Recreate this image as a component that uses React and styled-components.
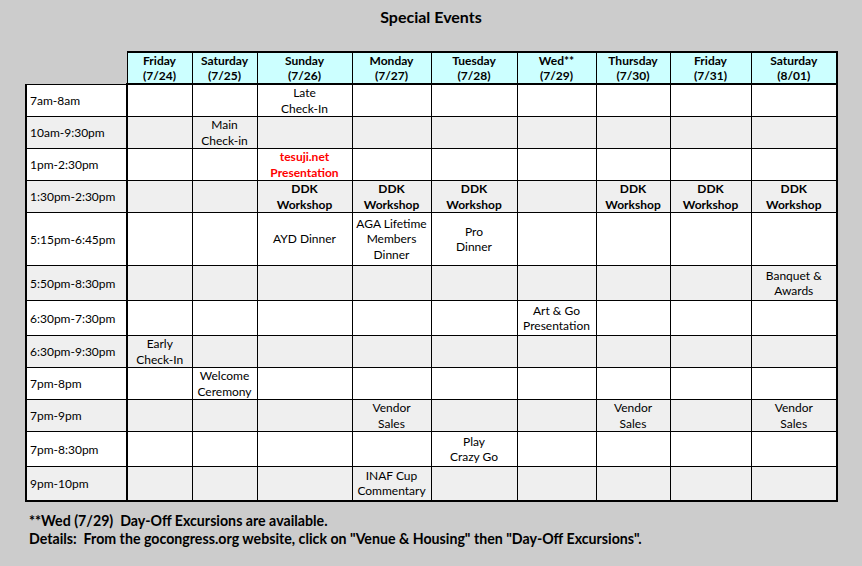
import React from 'react';
import styled, { createGlobalStyle } from 'styled-components';

const days = [
  { name: 'Friday', date: '(7/24)', width: 65 },
  { name: 'Saturday', date: '(7/25)', width: 65 },
  { name: 'Sunday', date: '(7/26)', width: 95 },
  { name: 'Monday', date: '(7/27)', width: 79 },
  { name: 'Tuesday', date: '(7/28)', width: 86 },
  { name: 'Wed**', date: '(7/29)', width: 79 },
  { name: 'Thursday', date: '(7/30)', width: 74 },
  { name: 'Friday', date: '(7/31)', width: 81 },
  { name: 'Saturday', date: '(8/01)', width: 86 }
];

// each row: time label, height, and cells keyed by day index
const rows = [
  { time: '7am-8am', height: 32, cells: { 2: ['Late', 'Check-In'] } },
  { time: '10am-9:30pm', height: 32, cells: { 1: ['Main', 'Check-in'] } },
  { time: '1pm-2:30pm', height: 32, cells: { 2: { lines: ['tesuji.net', 'Presentation'], red: true } } },
  {
    time: '1:30pm-2:30pm',
    height: 32,
    cells: {
      2: { lines: ['DDK', 'Workshop'], bold: true },
      3: { lines: ['DDK', 'Workshop'], bold: true },
      4: { lines: ['DDK', 'Workshop'], bold: true },
      6: { lines: ['DDK', 'Workshop'], bold: true },
      7: { lines: ['DDK', 'Workshop'], bold: true },
      8: { lines: ['DDK', 'Workshop'], bold: true }
    }
  },
  { time: '5:15pm-6:45pm', height: 53, cells: { 2: ['AYD Dinner'], 3: ['AGA Lifetime', 'Members', 'Dinner'], 4: ['Pro', 'Dinner'] } },
  { time: '5:50pm-8:30pm', height: 35, cells: { 8: ['Banquet &', 'Awards'] } },
  { time: '6:30pm-7:30pm', height: 35, cells: { 5: ['Art & Go', 'Presentation'] } },
  { time: '6:30pm-9:30pm', height: 32, cells: { 0: ['Early', 'Check-In'] } },
  { time: '7pm-8pm', height: 32, cells: { 1: ['Welcome', 'Ceremony'] } },
  { time: '7pm-9pm', height: 32, cells: { 3: ['Vendor', 'Sales'], 6: ['Vendor', 'Sales'], 8: ['Vendor', 'Sales'] } },
  { time: '7pm-8:30pm', height: 35, cells: { 4: ['Play', 'Crazy Go'] } },
  { time: '9pm-10pm', height: 34, cells: { 3: ['INAF Cup', 'Commentary'] } }
];

const GlobalStyle = createGlobalStyle`
  body {
    margin: 0;
    background: #cccccc;
    font-family: Lato, "Liberation Sans", sans-serif;
    color: #000;
  }
`;

const Page = styled.div`
  width: 862px;
  height: 566px;
  padding-top: 8px;
  box-sizing: border-box;
`;

const Title = styled.h1`
  margin: 0;
  font-size: 16px;
  font-weight: 700;
  text-align: center;
  line-height: 18px;
`;

const Schedule = styled.table`
  margin: 25px 0 0 25px;
  border-collapse: collapse;
  table-layout: fixed;
  width: 811px;
  font-size: 12px;
`;

const Corner = styled.th`
  border: none;
  background: transparent;
  padding: 0;
`;

const DayHead = styled.th`
  background: #ccffff;
  border: 1px solid #000;
  border-top: 2px solid #000;
  border-bottom: 2px solid #000;
  border-right: ${p => (p.$last ? '2px' : '1px')} solid #000;
  height: 30px;
  padding: 0;
  font-weight: 700;
  line-height: 15px;
  text-align: center;
  vertical-align: middle;
`;

const Row = styled.tr`
  background: ${p => (p.$shaded ? '#efefef' : '#ffffff')};
  height: ${p => p.$height}px;
`;

const TimeCell = styled.td`
  border: 1px solid #000;
  border-left: 2px solid #000;
  border-right: 2px solid #000;
  border-bottom: ${p => (p.$last ? '2px' : '1px')} solid #000;
  padding: 0 0 0 3px;
  text-align: left;
  vertical-align: middle;
  line-height: 15px;
`;

const EventCell = styled.td`
  border: 1px solid #000;
  border-right: ${p => (p.$lastCol ? '2px' : '1px')} solid #000;
  border-bottom: ${p => (p.$lastRow ? '2px' : '1px')} solid #000;
  padding: 0;
  text-align: center;
  vertical-align: middle;
  line-height: 15.5px;
  white-space: nowrap;
  font-weight: ${p => (p.$bold ? 700 : 400)};
  color: ${p => (p.$red ? '#ff0000' : '#000')};
`;

const Notes = styled.div`
  margin: 10px 0 0 29px;
  font-size: 14.2px;
  font-weight: 700;
  line-height: 18px;
`;

function Event({ cell, lastCol, lastRow }) {
  if (!cell) return <EventCell $lastCol={lastCol} $lastRow={lastRow} />;
  const data = Array.isArray(cell) ? { lines: cell } : cell;
  const isRed = data.red;
  return (
    <EventCell $lastCol={lastCol} $lastRow={lastRow} $bold={data.bold || isRed} $red={isRed}>
      {data.lines.map((l, i) => <div key={i}>{l}</div>)}
    </EventCell>
  );
}

export default function App() {
  return (
    <Page>
      <GlobalStyle />
      <Title>Special Events</Title>
      <Schedule>
        <colgroup>
          <col style={{ width: 101 }} />
          {days.map((d, i) => <col key={i} style={{ width: d.width }} />)}
        </colgroup>
        <thead>
          <tr>
            <Corner />
            {days.map((d, i) => (
              <DayHead key={i} $last={i === days.length - 1}>
                <div>{d.name}</div>
                <div>{d.date}</div>
              </DayHead>
            ))}
          </tr>
        </thead>
        <tbody>
          {rows.map((r, ri) => {
            const lastRow = ri === rows.length - 1;
            return (
              <Row key={ri} $shaded={ri % 2 === 1} $height={r.height}>
                <TimeCell $last={lastRow}>{r.time}</TimeCell>
                {days.map((d, di) => (
                  <Event key={di} cell={r.cells[di]} lastCol={di === days.length - 1} lastRow={lastRow} />
                ))}
              </Row>
            );
          })}
        </tbody>
      </Schedule>
      <Notes>
        <div>**Wed (7/29)&nbsp; Day-Off Excursions are available.</div>
        <div>Details:&nbsp; From the gocongress.org website, click on "Venue &amp; Housing" then "Day-Off Excursions".</div>
      </Notes>
    </Page>
  );
}
